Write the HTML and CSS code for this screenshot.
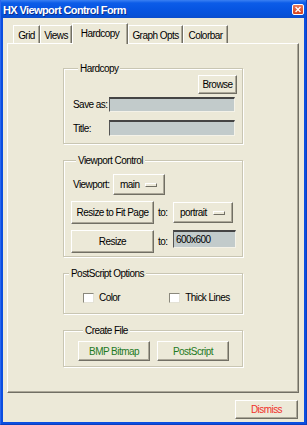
FILE: index.html
```html
<!DOCTYPE html>
<html>
<head>
<meta charset="utf-8">
<link rel="stylesheet" href="styles.css">
</head>
<body>
<div class="window">
  <div class="titlebar">
    <span class="title">HX Viewport Control Form</span>
    <span class="close"><svg width="11" height="11" viewBox="0 0 11 11"><path d="M2.5 2.5 L8.5 8.5 M8.5 2.5 L2.5 8.5" stroke="#fff" stroke-width="1.6" fill="none"/></svg></span>
  </div>
  <div class="client">
    <div class="tabs">
      <div class="tab t-grid">Grid</div>
      <div class="tab t-views">Views</div>
      <div class="tab t-hard active">Hardcopy</div>
      <div class="tab t-graph">Graph Opts</div>
      <div class="tab t-color">Colorbar</div>
    </div>
    <div class="panel">
      <div class="group g-hard">
        <div class="legend">Hardcopy</div>
        <div class="browse-row"><div class="btn browse">Browse</div></div>
        <div class="frow saveas"><span class="flabel">Save as:</span><div class="field f-long"></div></div>
        <div class="frow titlerow"><span class="flabel">Title:</span><div class="field f-long f-title"></div></div>
      </div>
      <div class="group g-view">
        <div class="legend">Viewport Control</div>
        <div class="vrow"><span class="vlabel">Viewport:</span><div class="menu m-main"><span>main</span><i class="ind"></i></div></div>
        <div class="rrow first"><div class="btn rbtn">Resize to Fit Page</div><span class="to">to:</span><div class="menu m-port"><span>portrait</span><i class="ind"></i></div></div>
        <div class="rrow"><div class="btn rbtn">Resize</div><span class="to">to:</span><div class="field f-size">600x600</div></div>
      </div>
      <div class="group g-ps">
        <div class="legend">PostScript Options</div>
        <div class="crow">
          <span class="cb c-color"></span><span class="clabel">Color</span>
          <span class="cb c-thick"></span><span class="clabel">Thick Lines</span>
        </div>
      </div>
      <div class="group g-create">
        <div class="legend">Create File</div>
        <div class="brow">
          <div class="btn green">BMP Bitmap</div>
          <div class="btn green">PostScript</div>
        </div>
      </div>
    </div>
    <div class="bottom"><div class="btn dismiss">Dismiss</div></div>
  </div>
</div>
</body>
</html>
```
FILE: styles.css
```css
* { box-sizing: border-box; }
html, body { margin: 0; padding: 0; }
body {
  width: 307px; height: 425px; overflow: hidden;
  font-family: "Liberation Sans", Arial, sans-serif;
  font-size: 10px; letter-spacing: -0.55px; color: #000;
  white-space: nowrap;
}
.window {
  width: 307px; height: 425px;
  display: flex; flex-direction: column;
  background: #0b4ee0;
  border-left: 1px solid #2a66ee;
  border-right: 1px solid #0a3fc0;
  border-bottom: 1px solid #0a3fc0;
}
.titlebar {
  height: 18px; flex: none;
  display: flex; align-items: center; justify-content: space-between;
  padding: 0 2px 0 2px;
  background: linear-gradient(to bottom, #3a80f2 0, #0c5ce8 3px, #0755e2 9px, #0651d8 15px, #0a4ccc 18px);
  color: #fff; font-weight: bold; font-size: 11px; letter-spacing: -0.6px;
  text-shadow: 1px 1px 0 #0a2e90;
}
.title { padding-top: 1px; }
.close {
  width: 12px; height: 11px;
  display: flex; align-items: center; justify-content: center;
  background: linear-gradient(#e8795a, #d8421c);
  border: 1px solid #fff; border-radius: 2px;
  margin-top: 1px;
}
.close svg { width: 10px; height: 9px; }
.client {
  flex: 1;
  margin: 0 2px 2px 2px;
  background: #ece9d8;
  display: flex; flex-direction: column;
  padding: 5px 5px 3px 4px;
}
.tabs {
  height: 20px; flex: none;
  display: flex; align-items: flex-end;
  padding-left: 6px;
  position: relative; z-index: 1;
}
.tab {
  height: 18px;
  display: flex; align-items: center; justify-content: center;
  border-top: 1px solid #fff; border-left: 1px solid #fff;
  border-right: 1px solid #716f64;
  box-shadow: inset -1px 0 0 #aca899;
  background: #ece9d8;
  padding-top: 1px;
}
.tab.active {
  height: 21px; margin-bottom: -1px;
  padding-bottom: 2px;
}
.t-grid { width: 27px; }
.t-views { width: 32px; }
.t-hard { width: 56px; }
.t-graph { width: 55px; }
.t-color { width: 45px; }
.panel {
  height: 350px; flex: none;
  border-top: 1px solid #fff; border-left: 1px solid #fff;
  border-right: 1px solid #716f64; border-bottom: 1px solid #716f64;
  box-shadow: inset -1px -1px 0 #aca899;
  display: flex; flex-direction: column; align-items: center;
  padding-top: 24px;
}
.group {
  width: 180px;
  border: 1px solid #c9c6b3;
  box-shadow: inset 1px 1px 0 #fff, 1px 1px 0 #fff;
  margin-bottom: 16px;
}
.legend {
  margin: -7px 0 0 5px;
  height: 13px; line-height: 13px;
  padding: 0 2px;
  background: #ece9d8;
  width: fit-content;
}
.btn {
  display: flex; align-items: center; justify-content: center;
  background: #ece9d8;
  border-top: 1px solid #fff; border-left: 1px solid #fff;
  border-right: 1px solid #716f64; border-bottom: 1px solid #716f64;
  box-shadow: inset -1px -1px 0 #aca899;
}
.g-hard { height: 76px; padding: 0 5px 0 9px; }
.browse-row { display: flex; justify-content: flex-end; }
.browse { width: 39px; height: 19px; }
.frow { display: flex; align-items: center; }
.saveas { margin-top: 3px; }
.titlerow { margin-top: 8px; }
.flabel { width: 36px; }
.field {
  background: #c2cbcb;
  border-top: 2px solid #444; border-left: 1px solid #555;
  border-bottom: 1px solid #f4f2e8; border-right: 1px solid #f4f2e8;
}
.f-long { width: 126px; height: 15px; }
.f-title { height: 16px; }
.g-view { height: 97px; padding: 0 5px 0 7px; }
.vrow { display: flex; align-items: center; margin-top: 7px; height: 21px; }
.vlabel { width: 42px; padding-left: 2px; }
.menu {
  height: 21px;
  display: flex; align-items: center; justify-content: space-between;
  padding: 0 7px 0 6px;
  background: #ece9d8;
  border-top: 1px solid #fff; border-left: 1px solid #fff;
  border-right: 1px solid #716f64; border-bottom: 1px solid #716f64;
  box-shadow: inset -1px -1px 0 #aca899;
}
.ind {
  display: block; width: 12px; height: 4px;
  border-top: 1px solid #fff; border-left: 1px solid #fff;
  border-right: 1px solid #716f64; border-bottom: 1px solid #716f64;
}
.m-main { width: 52px; }
.m-port { width: 60px; }
.rrow { display: flex; align-items: center; margin-top: 6px; height: 23px; }
.rbtn { width: 83px; height: 23px; }
.to { width: 19px; padding-left: 4px; }
.f-size { width: 63px; height: 18px; padding-left: 2px; display: flex; align-items: center; align-self: flex-start; }
.g-ps { height: 41px; }
.crow { display: flex; align-items: center; margin-top: 11px; padding-left: 19px; height: 13px; }
.cb {
  width: 11px; height: 10px;
  background: #fff;
  border-top: 1px solid #8a887c; border-left: 1px solid #8a887c;
  border-bottom: 1px solid #e4e2d6; border-right: 1px solid #e4e2d6;
}
.clabel { margin-left: 5px; }
.c-thick { margin-left: 49px; }
.g-create { height: 37px; margin-bottom: 0; padding-left: 14px; }
.brow { display: flex; gap: 7px; margin-top: 4px; }
.green { width: 72px; height: 20px; color: #1e7a1e; }
.bottom { display: flex; justify-content: flex-end; margin-top: 7px; padding-right: 1px; }
.dismiss { width: 63px; height: 19px; color: #f0302a; }
```
